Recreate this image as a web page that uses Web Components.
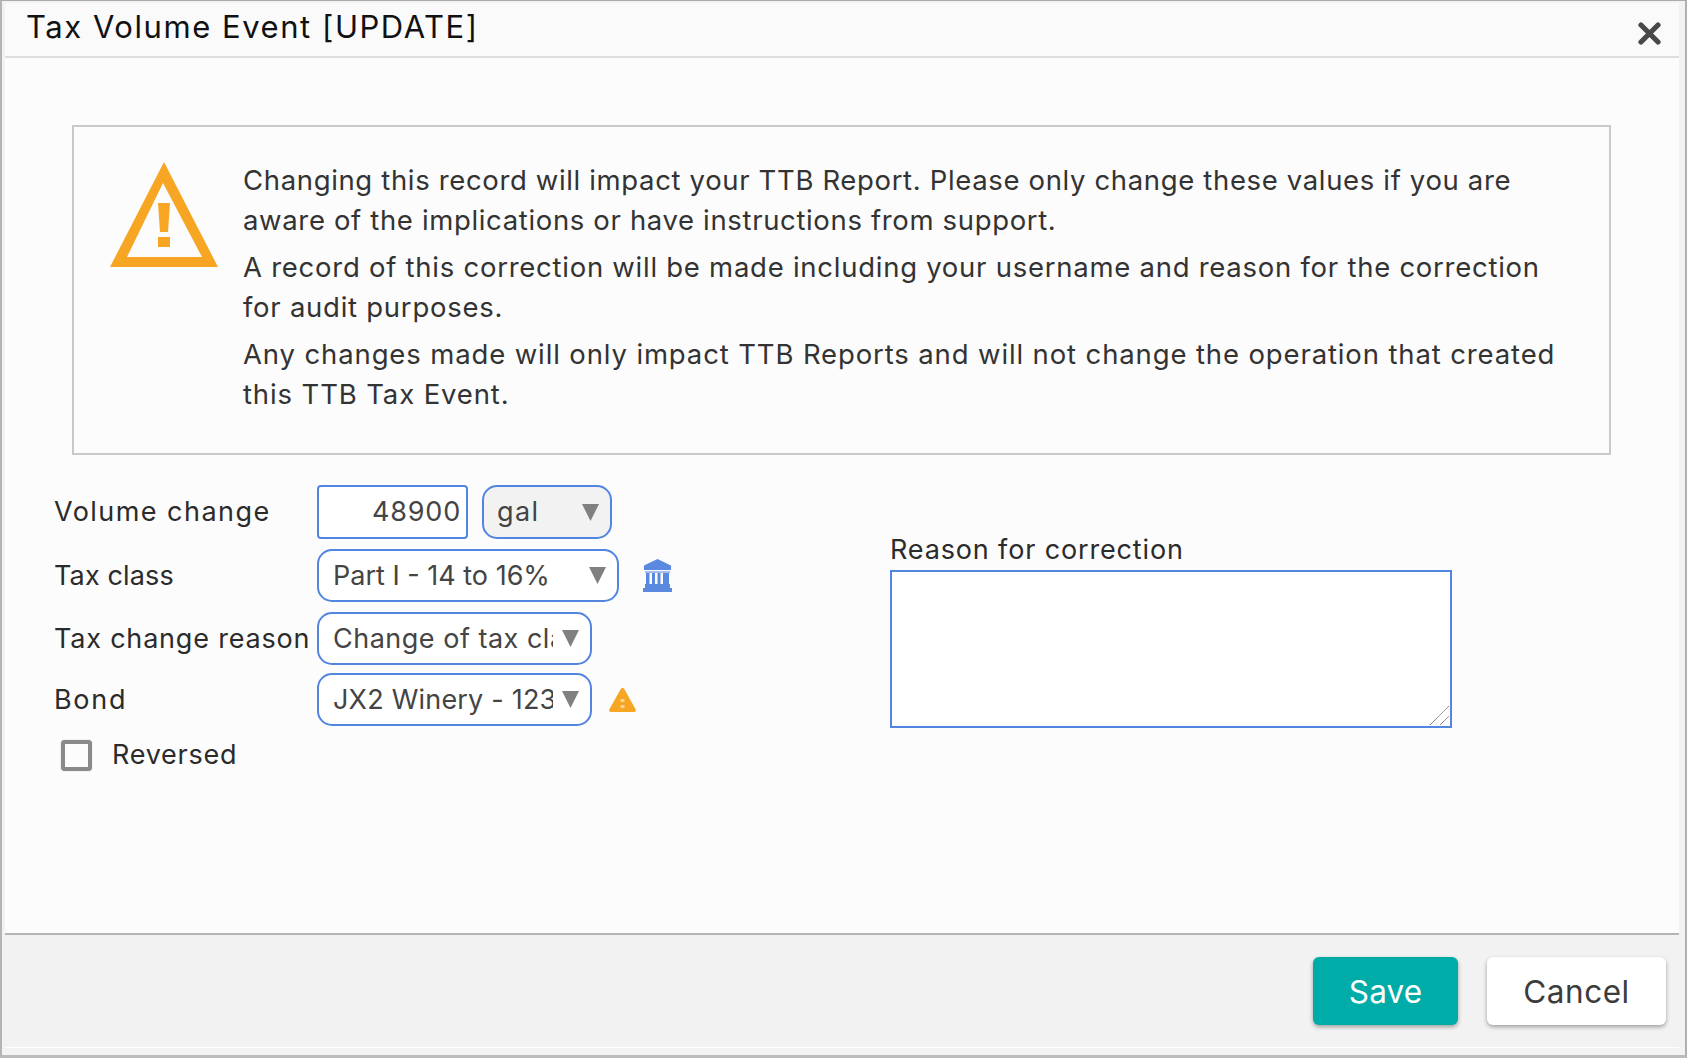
<!DOCTYPE html>
<html>
<head>
<meta charset="utf-8">
<title>Tax Volume Event</title>
<style>
html, body { margin: 0; height: 100%; }
body { font-family: Inter, "Open Sans", "Liberation Sans", sans-serif; background: #f4f4f4; }
</style>
</head>
<body>
<modal-frame>
  <span slot="title">Tax Volume Event [UPDATE]</span>

  <warning-notice>
    <p style="letter-spacing:0.65px">Changing this record will impact your TTB Report. Please only change these values if you are aware of the implications or have instructions from support.</p>
    <p style="letter-spacing:0.74px">A record of this correction will be made including your username and reason for the correction for audit purposes.</p>
    <p style="letter-spacing:0.87px">Any changes made will only impact TTB Reports and will not change the operation that created this TTB Tax Event.</p>
  </warning-notice>

  <correction-form>
    <field-row label="Volume change" style="height:54px;margin-bottom:10px;--ls:1.45px;--nudge:2px">
      <number-box>48900</number-box>
      <select-box style="width:130px;margin-left:14px;background:#f2f2f2;--pad:13px">gal</select-box>
    </field-row>
    <field-row label="Tax class" style="margin-bottom:10px;--ls:0.15px">
      <select-box style="width:302px;--pad:14px;--ls:0">Part I - 14 to 16%</select-box>
      <bank-icon></bank-icon>
    </field-row>
    <field-row label="Tax change reason" style="margin-bottom:8px;--ls:0.8px">
      <select-box style="width:275px;--pad:14px;--ls:0.5px">Change of tax class</select-box>
    </field-row>
    <field-row label="Bond" style="--ls:1.7px">
      <select-box style="width:275px;--pad:14px;--ls:0.2px">JX2 Winery - 12345</select-box>
      <alert-icon></alert-icon>
    </field-row>
    <check-row>Reversed</check-row>
    <reason-box slot="side">Reason for correction</reason-box>
  </correction-form>

  <action-button slot="footer" kind="primary">Save</action-button>
  <action-button slot="footer">Cancel</action-button>
</modal-frame>

<script>
const frameTemplate = document.createElement("template");
frameTemplate.innerHTML = `
<style>
:host {
  display: flex;
  flex-direction: column;
  box-sizing: border-box;
  height: 1058px;
  background: #f2f2f2;
  border-top: 1px solid #ababab;
  border-left: 2px solid #b4b4b4;
  border-right: 2px solid #b0b0b0;
  border-bottom: 3px solid #bcbcbc;
  padding: 2px 6px 7px 3px;
}
#header {
  display: flex;
  justify-content: space-between;
  height: 53px;
  background: #fafafa;
  border-bottom: 2px solid #dedede;
  padding-left: 21px;
  font-size: 31px;
  letter-spacing: 1.55px;
  line-height: 48px;
  color: #111;
}
#close { margin: 19px 18px 0 0; width: 23px; height: 23px; display: block; }
#body { flex: 1; background: #fcfcfc; min-height: 0; }
#footer {
  display: flex;
  justify-content: flex-end;
  gap: 29px;
  height: 115px;
  box-sizing: border-box;
  padding: 22px 13px 0 0;
  background: #f2f2f2;
  border-top: 2px solid #b5b5b5;
  border-bottom: 1px solid #fff;
}
</style>
<div id="header">
  <slot name="title"></slot>
  <svg id="close" viewBox="0 0 23 23"><path d="M3 3 20 20M20 3 3 20" stroke="#484848" stroke-width="5.200" stroke-linecap="round"/></svg>
</div>
<div id="body"><slot></slot></div>
<div id="footer"><slot name="footer"></slot></div>
`;

class ModalFrame extends HTMLElement {
  constructor() {
    super();
    this.attachShadow({ mode: "open" });
    this.shadowRoot.appendChild(frameTemplate.content.cloneNode(true));
  }
}
customElements.define("modal-frame", ModalFrame);

const noticeTemplate = document.createElement("template");
noticeTemplate.innerHTML = `
<style>
:host {
  display: flex;
  box-sizing: border-box;
  margin: 67px 68px 0 67px;
  border: 2px solid #c9c9c9;
  padding: 33px 39px 39px 36px;
  color: #333;
  font-size: 27.500px;
  line-height: 40px;
}
svg { flex: none; width: 108px; height: 105px; margin: 2px 25px 0 0; }
#text { flex: 1; }
::slotted(p) { margin: 0 0 7px; }
::slotted(p:last-child) { margin-bottom: 0; }
</style>
<svg viewBox="0 0 108 105">
  <path fill-rule="evenodd" fill="#f6a623" d="M54 0 108 105H0ZM53 21 17 95H92Z"/>
  <path fill="#f6a623" d="M48 41H60L58 70H50ZM48 75H60V85H48Z"/>
</svg>
<div id="text"><slot></slot></div>
`;

class WarningNotice extends HTMLElement {
  constructor() {
    super();
    this.attachShadow({ mode: "open" });
    this.shadowRoot.appendChild(noticeTemplate.content.cloneNode(true));
  }
}
customElements.define("warning-notice", WarningNotice);

const formTemplate = document.createElement("template");
formTemplate.innerHTML = `
<style>
:host {
  display: flex;
  margin: 30px 0 0 49px;
  color: #2b2b2b;
  font-size: 27px;
  letter-spacing: 0.75px;
}
#left { width: 836px; flex: none; }
#side { padding-top: 48px; }
</style>
<div id="left"><slot></slot></div>
<div id="side"><slot name="side"></slot></div>
`;

class CorrectionForm extends HTMLElement {
  constructor() {
    super();
    this.attachShadow({ mode: "open" });
    this.shadowRoot.appendChild(formTemplate.content.cloneNode(true));
  }
}
customElements.define("correction-form", CorrectionForm);

const rowTemplate = document.createElement("template");
rowTemplate.innerHTML = `
<style>
:host { display: flex; align-items: center; height: 53px; }
#label {
  width: 263px;
  flex: none;
  white-space: nowrap;
  letter-spacing: var(--ls, 0.75px);
  padding-bottom: var(--nudge, 0);
}
</style>
<div id="label"></div>
<slot></slot>
`;

class FieldRow extends HTMLElement {
  constructor() {
    super();
    this.attachShadow({ mode: "open" });
    this.shadowRoot.appendChild(rowTemplate.content.cloneNode(true));
    this.label = this.shadowRoot.querySelector("#label");
  }
  connectedCallback() {
    this.label.textContent = this.getAttribute("label");
  }
}
customElements.define("field-row", FieldRow);

const numberTemplate = document.createElement("template");
numberTemplate.innerHTML = `
<style>
:host {
  display: flex;
  align-items: center;
  justify-content: flex-end;
  box-sizing: border-box;
  width: 151px;
  height: 100%;
  padding: 0 5px var(--nudge, 0) 0;
  background: #fff;
  border: 2px solid #5285e0;
  border-radius: 4px;
  color: #444;
  letter-spacing: 0.8px;
}
</style>
<slot></slot>
`;

class NumberBox extends HTMLElement {
  constructor() {
    super();
    this.attachShadow({ mode: "open" });
    this.shadowRoot.appendChild(numberTemplate.content.cloneNode(true));
  }
}
customElements.define("number-box", NumberBox);

const selectTemplate = document.createElement("template");
selectTemplate.innerHTML = `
<style>
:host {
  display: flex;
  align-items: center;
  box-sizing: border-box;
  height: 100%;
  padding: 0 11px 0 var(--pad, 16px);
  background: #fff;
  border: 2px solid #5285e0;
  border-radius: 15px;
  color: #444;
  letter-spacing: var(--ls, 0.8px);
}
#value {
  flex: 1;
  min-width: 0;
  overflow: hidden;
  white-space: nowrap;
  margin-right: 9px;
  padding-bottom: var(--nudge, 0);
}
svg { flex: none; width: 17px; height: 17px; }
</style>
<div id="value"><slot></slot></div>
<svg viewBox="0 0 17 17"><path d="M0 0H17L8.5 17Z" fill="#808080"/></svg>
`;

class SelectBox extends HTMLElement {
  constructor() {
    super();
    this.attachShadow({ mode: "open" });
    this.shadowRoot.appendChild(selectTemplate.content.cloneNode(true));
  }
}
customElements.define("select-box", SelectBox);

class BankIcon extends HTMLElement {
  constructor() {
    super();
    this.attachShadow({ mode: "open" });
    this.shadowRoot.innerHTML = `
<style>
:host { display: block; margin-left: 24px; width: 29px; height: 33px; }
svg { display: block; }
</style>
<svg viewBox="0 0 29 33" width="29" height="33">
  <path fill="#5a8ae0" d="M14.500 0 28 6.500V11H1V6.500Z"/>
  <path fill="#5a8ae0" opacity=".55" d="M2 12H27V14H2Z"/>
  <path fill="#5a8ae0" d="M3 14H6.500V25H3ZM9 14H12V25H9ZM14.500 14H17.500V25H14.500ZM20 14H26V25H20Z"/>
  <path fill="#5a8ae0" d="M2 25H27V29H2ZM0 29H29V33H0Z"/>
</svg>`;
  }
}
customElements.define("bank-icon", BankIcon);

class AlertIcon extends HTMLElement {
  constructor() {
    super();
    this.attachShadow({ mode: "open" });
    this.shadowRoot.innerHTML = `
<style>
:host { display: block; margin: 1px 0 0 17px; width: 27px; height: 24px; }
svg { display: block; }
</style>
<svg viewBox="0 0 27 24" width="27" height="24">
  <path fill="#f6a623" d="M13.500 0C14.300 0 15 .5 15.400 1.200L26.700 21.500C27.300 22.700 26.500 24 25.200 24H1.800C.5 24 -.3 22.700 .3 21.500L11.600 1.200C12 .5 12.700 0 13.500 0Z"/>
  <path fill="#fad08a" d="M11.500 11H15.500V14H11.500ZM11.500 17H15.500V20H11.500Z"/>
</svg>`;
  }
}
customElements.define("alert-icon", AlertIcon);

const checkTemplate = document.createElement("template");
checkTemplate.innerHTML = `
<style>
:host { display: flex; align-items: center; margin: 14px 0 0 7px; height: 31px; }
#box {
  flex: none;
  box-sizing: border-box;
  width: 31px;
  height: 31px;
  margin-right: 20px;
  border: 4px solid #8a8a8a;
  border-radius: 4px;
  background: #fcfcfc;
  box-shadow: 0 0 1px #8a8a8a;
}
#text { margin-bottom: 2px; }
</style>
<div id="box"></div>
<div id="text"><slot></slot></div>
`;

class CheckRow extends HTMLElement {
  constructor() {
    super();
    this.attachShadow({ mode: "open" });
    this.shadowRoot.appendChild(checkTemplate.content.cloneNode(true));
  }
}
customElements.define("check-row", CheckRow);

const reasonTemplate = document.createElement("template");
reasonTemplate.innerHTML = `
<style>
:host { display: block; line-height: 34px; letter-spacing: 0.85px; }
#label { margin-bottom: 3px; }
#wrap { position: relative; }
textarea {
  display: block;
  box-sizing: border-box;
  width: 562px;
  height: 158px;
  margin: 0;
  padding: 4px;
  background: #fff;
  border: 2px solid #5285e0;
  border-radius: 0;
  outline: none;
  resize: none;
}
#grip { position: absolute; right: 3px; bottom: 3px; width: 19px; height: 19px; }
</style>
<div id="label"><slot></slot></div>
<div id="wrap">
  <textarea></textarea>
  <svg id="grip" viewBox="0 0 19 19"><path d="M0 19 19 0M10 19 19 10" stroke="#555" stroke-width="1" stroke-dasharray="1 .5" fill="none"/></svg>
</div>
`;

class ReasonBox extends HTMLElement {
  constructor() {
    super();
    this.attachShadow({ mode: "open" });
    this.shadowRoot.appendChild(reasonTemplate.content.cloneNode(true));
  }
}
customElements.define("reason-box", ReasonBox);

const buttonTemplate = document.createElement("template");
buttonTemplate.innerHTML = `
<style>
:host {
  display: flex;
  align-items: center;
  justify-content: center;
  box-sizing: border-box;
  width: 179px;
  height: 68px;
  background: #fff;
  color: #3c3c3c;
  border-radius: 6px;
  box-shadow: 0 2px 4px rgba(0, 0, 0, 0.35);
  font-size: 31.500px;
  letter-spacing: 0.5px;
}
:host([kind="primary"]) {
  width: 145px;
  background: #00aca8;
  color: #fff;
  letter-spacing: 0.1px;
}
</style>
<slot></slot>
`;

class ActionButton extends HTMLElement {
  constructor() {
    super();
    this.attachShadow({ mode: "open" });
    this.shadowRoot.appendChild(buttonTemplate.content.cloneNode(true));
  }
}
customElements.define("action-button", ActionButton);
</script>
</body>
</html>
